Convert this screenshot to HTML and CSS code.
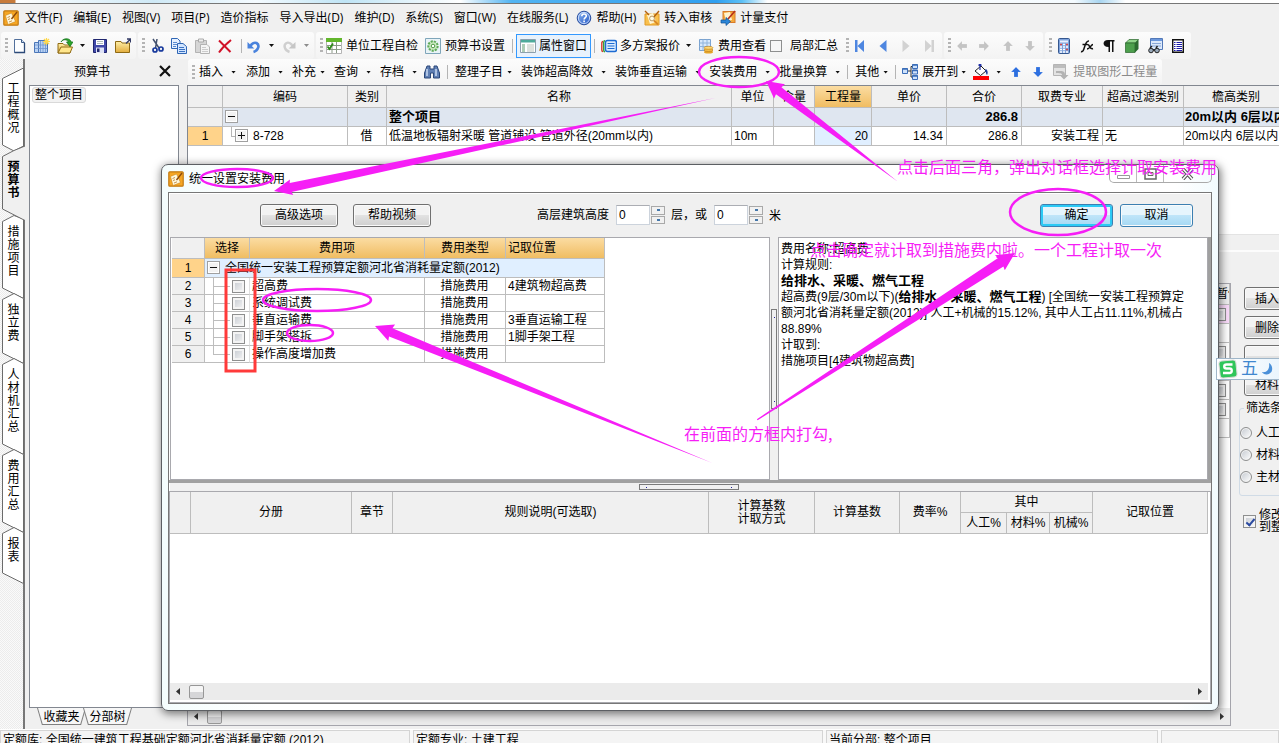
FILE: index.html
```html
<!DOCTYPE html>
<html lang="zh-CN">
<head>
<meta charset="utf-8">
<title>预算书</title>
<link rel="stylesheet" href="styles.css">
</head>
<body>
<svg class="defs" aria-hidden="true">
  <defs>
    <linearGradient id="blue" x1="0" y1="0" x2="1" y2="1"><stop offset="0" stop-color="#8fb8f2"/><stop offset="1" stop-color="#1f55c4"/></linearGradient>
    <linearGradient id="gold" x1="0" y1="0" x2="0" y2="1"><stop offset="0" stop-color="#fff0a8"/><stop offset="1" stop-color="#e2ac3c"/></linearGradient>
    <symbol id="i-app" viewBox="0 0 16 16"><rect x=".8" y=".8" width="14.4" height="14.4" rx="1" fill="#f6a623" stroke="#c27a12" stroke-width="1.2"/><path d="M2.500 5.500 8.500 3l4 8.500L5 14.500z" fill="#fff8dc" stroke="#c27a12" stroke-width=".5"/><path d="M4.500 7.500l2.500-1M5 9.500l2-.7M6 12l3-1.200" stroke="#b5762a" stroke-width=".8"/><path d="M14 2 8.500 9" stroke="#8b4a0c" stroke-width="1.400"/></symbol>
    <symbol id="i-help" viewBox="0 0 16 16"><circle cx="8" cy="8" r="6.800" fill="url(#blue)" stroke="#2a4f9e"/><circle cx="8" cy="8" r="5.600" fill="none" stroke="#dce9ff" stroke-width=".8"/><path d="M5.800 6.200c0-3 4.600-2.900 4.500-.2 0 1.500-2.200 1.600-2.200 3.400M8.100 10.600v1.600" fill="none" stroke="#fff" stroke-width="1.600"/></symbol>
    <symbol id="i-audit" viewBox="0 0 16 16"><path d="M1 4h14v11H1z" fill="#f9c04e" stroke="#e09a24"/><path d="M3 5l6-2 3 9-6 2z" fill="#fff6d6"/><path d="M1 1l4 4M15 1 9 8" stroke="#b3600f" stroke-width="1.400"/><circle cx="8" cy="8.500" r="2.400" fill="#fffbe8" stroke="#a9834a" stroke-width=".8"/><path d="M10 10.500l4 4" stroke="#d98a25" stroke-width="1.800"/></symbol>
    <symbol id="i-pay" viewBox="0 0 16 16"><rect x="3" y="1.500" width="12" height="11" fill="#f5a93a" stroke="#d77a2a"/><path d="M4 3l6-1 2 8-6 1z" fill="#fff3d0"/><path d="M15 1 8 9" stroke="#b5301c" stroke-width="1.600"/><path d="M1 10h5V7.500l4.500 4L6 15.500V13H1z" fill="#2c86d8" stroke="#0d4e93" stroke-width=".7"/></symbol>
    <symbol id="i-new" viewBox="0 0 16 16"><path d="M3.500 1.500h7l3 3v10h-10z" fill="#fdfeff" stroke="#52709c"/><path d="M10.500 1.500v3h3" fill="#cfe0f5" stroke="#3d5b86"/><path d="M13.500 5v9.500h-10" fill="none" stroke="#2c4a78" stroke-width="1.300"/></symbol>
    <symbol id="i-book" viewBox="0 0 16 16"><path d="M.5 4.500h4v10h-4zM4.500 2.500h9v12h-9z" fill="#b9d2f3" stroke="#4b76b8"/><path d="M6.500 3v11M9 3v11M11.500 3v11M1 7h12M1 10.500h12" stroke="#6d94cf" stroke-width=".8"/><path d="M12.500 0v7M9 3.500h7M10 1l5 5M15 1l-5 5" stroke="#ffd84a" stroke-width="1.200"/></symbol>
    <symbol id="i-open" viewBox="0 0 16 16"><path d="M1 15V5.500h5l1.500 1.500H13v8z" fill="url(#gold)" stroke="#8f6a14"/><path d="M1 15l3-6h11.500L13 15z" fill="#ffe68c" stroke="#8f6a14"/><path d="M4 4C6 1 10 1 11.500 4H9.500l3.500 4.500L16 4h-1.700C12.500-.8 6 0 4 4z" fill="#2ba52b" stroke="#12711a" stroke-width=".7"/></symbol>
    <symbol id="i-save" viewBox="0 0 16 16"><path d="M1.500 1.500h13v13h-13z" fill="#4048a8" stroke="#20266e"/><path d="M4 2h8v5H4z" fill="#fff"/><path d="M5 3.500h6M5 5.500h6" stroke="#9aa" stroke-width=".8"/><path d="M4 9.500h8V15H4z" fill="#dfe3f6"/><path d="M5 10.500h2.500V14H5z" fill="#20266e"/></symbol>
    <symbol id="i-folder" viewBox="0 0 16 16"><path d="M.5 3.500H6l1 1.500h7.500v9.500H.5z" fill="url(#gold)" stroke="#8f6a14"/><path d="M11 5.500 15 1.500M12 1h3.500v3.500" fill="none" stroke="#333b66" stroke-width="1.300"/></symbol>
    <symbol id="i-cut" viewBox="0 0 16 16"><path d="M4 1l6 9M8 1 6.500 10" stroke="#44526f" stroke-width="1.500"/><circle cx="6" cy="12" r="2" fill="none" stroke="#16389c" stroke-width="1.700"/><circle cx="12" cy="11" r="2" fill="none" stroke="#16389c" stroke-width="1.700"/></symbol>
    <symbol id="i-copy" viewBox="0 0 16 16"><path d="M.5.5h6l2.500 2.500v7.500H.5z" fill="#e5f0ff" stroke="#2f66b5"/><path d="M2 4.500h4M2 6.500h4M2 8.500h3" stroke="#5b8bd0"/><path d="M6.500 5.500H12l3.500 3v7h-9z" fill="#d2e5ff" stroke="#2f66b5"/><path d="M8 9.500h5M8 11.500h6M8 13.500h6" stroke="#3a72c2"/></symbol>
    <symbol id="i-paste" viewBox="0 0 16 16"><path d="M1.500 2.500h11v12h-11z" fill="#d6d6d6" stroke="#b3b3b3"/><path d="M4.500 1h5v3h-5z" fill="#eee" stroke="#aaa"/><path d="M6.500 6.500H13l2.500 2.500v6.500h-9z" fill="#f5f5f5" stroke="#b3b3b3"/><path d="M8 9.500h4M8 11.500h6M8 13.500h6" stroke="#ccc"/></symbol>
    <symbol id="i-del" viewBox="0 0 16 16"><path d="M2 2.500 13.500 14M14 2C9 6 5 10 2 14.500" fill="none" stroke="#d11228" stroke-width="2"/></symbol>
    <symbol id="i-undo" viewBox="0 0 16 16"><path d="M7.500 14c5-1.500 6.500-7 3-9C8 4 5.500 6 4.500 8" fill="none" stroke="#4a83dd" stroke-width="2.600"/><path d="M1.500 4v6.500h6.800z" fill="#4a83dd"/></symbol>
    <symbol id="i-redo" viewBox="0 0 16 16"><path d="M8.500 14c-5-1.500-6.500-7-3-9C8 4 10.500 6 11.500 8" fill="none" stroke="#cfcfcf" stroke-width="2.400"/><path d="M14.500 4v6.500H7.700z" fill="#c6c6c6"/></symbol>
    <symbol id="i-check" viewBox="0 0 16 16"><path d="M.5.5h15v15H.5z" fill="#fff" stroke="#b5b5b5"/><path d="M0 0h16v4H0z" fill="#62b62c"/><path d="M1 7.500h14M1 11.500h14M6 4v11M10.500 4v11" stroke="#8a9a86"/><path d="M1.500 8.500l2 2.500L7 5.500" fill="none" stroke="#2e8b18" stroke-width="1.800"/></symbol>
    <symbol id="i-gear" viewBox="0 0 16 16"><path d="M.5.5h15v15H.5z" fill="#e9f3f7" stroke="#7fa6ba"/><circle cx="8" cy="8" r="4.700" fill="#cdeac2" stroke="#5faa58" stroke-width="2" stroke-dasharray="2.200 1"/><circle cx="8" cy="8" r="1.800" fill="#fff" stroke="#4d9a44"/></symbol>
    <symbol id="i-prop" viewBox="0 0 16 16"><path d="M.5 1.500h15v13H.5z" fill="#fff" stroke="#8ca0ad"/><path d="M1 2h14v2.500H1z" fill="#4eab9b"/><path d="M2 7h3M2 9h3M2 11h3M2 13h3" stroke="#5b9c6e"/><path d="M7 7h7M7 9h7M7 11h7M7 13h7" stroke="#b9c4bb"/></symbol>
    <symbol id="i-multi" viewBox="0 0 16 16"><path d="M2 3.500Q.8 3.500.8 5v7q0 1.500 1.200 1.500" fill="none" stroke="#d23b2c" stroke-width="1.400"/><path d="M4 2.800q-1.300 0-1.300 1.500v8q0 1.500 1.300 1.500" fill="none" stroke="#37a137" stroke-width="1.400"/><rect x="4.500" y="2.500" width="11" height="11" rx="2" fill="#dcecff" stroke="#1d6bd2" stroke-width="1.500"/><path d="M6.500 5.500h7M6.500 8h7M6.500 10.500h7" stroke="#1d6bd2" stroke-width="1.200"/></symbol>
    <symbol id="i-fee" viewBox="0 0 16 16"><path d="M1.500 1.500h11v11h-11z" fill="#d7e8fb" stroke="#7aa2cf"/><path d="M1.500 5h11M1.500 8.500h11M5 1.500v11M9 1.500v11" stroke="#8fb3da"/><ellipse cx="10.500" cy="14" rx="4.500" ry="1.500" fill="#e5a427"/><ellipse cx="10.500" cy="12" rx="4.500" ry="1.500" fill="#f5c04a" stroke="#b9781a" stroke-width=".6"/><ellipse cx="10.500" cy="9.800" rx="4.500" ry="1.500" fill="#ffd971" stroke="#b9781a" stroke-width=".6"/></symbol>
    <symbol id="i-first" viewBox="0 0 16 16"><path d="M3 2h2.500v12H3zM12 2v12L5.500 8z" fill="#4e86e0"/></symbol>
    <symbol id="i-prev" viewBox="0 0 16 16"><path d="M11.500 2v12L4.500 8z" fill="#4e86e0"/></symbol>
    <symbol id="i-next" viewBox="0 0 16 16"><path d="M4.500 2v12l7-6z" fill="#d2d2d2"/></symbol>
    <symbol id="i-last" viewBox="0 0 16 16"><path d="M4 2v12l6.500-6zM10.500 2H13v12h-2.500z" fill="#d2d2d2"/></symbol>
    <symbol id="i-arrow" viewBox="0 0 16 16"><path d="M8 3l5 5h-3v5H6V8H3z" fill="currentColor" stroke="#fff" stroke-opacity=".3" stroke-width=".6"/></symbol>
    <symbol id="i-calc" viewBox="0 0 16 16"><rect x="2.500" y=".5" width="11" height="15" rx="1" fill="#7fa3dc" stroke="#35578f"/><path d="M4 2.500h8v2H4z" fill="#e8f0ff"/><path d="M4 6.500h2M7 6.500h2M10 6.500h2M4 9h2M7 9h2M10 9h2M4 11.500h2M7 11.500h2M4 14h2M7 14h2M10 14h2" stroke="#fff" stroke-width="1.500"/><path d="M4 6.500h2M10 6.500h2M10 11.500h2" stroke="#d94848" stroke-width="1.500"/></symbol>
    <symbol id="i-fx" viewBox="0 0 16 16"><path d="M2 13.500c4 1.500 3-11 8-10.500M3.500 6.500h5M8.500 7c2-1.500 2 5 5.500 3.500M14 6.500c-2 0-3 4.500-6 4.500" fill="none" stroke="#111" stroke-width="1.500"/></symbol>
    <symbol id="i-para" viewBox="0 0 16 16"><path d="M7 2h6.500v1.500h-1V14h-1.500V3.500H9V14H7.500V9C1 9 1 2 7 2z" fill="#111"/></symbol>
    <symbol id="i-cube" viewBox="0 0 16 16"><path d="M1.500 5 5 1.500h9.500L11 5z" fill="#8fd48a" stroke="#27632a" stroke-width=".7"/><path d="M1.500 5H11v9.500H1.500z" fill="#4c9f4c" stroke="#27632a" stroke-width=".7"/><path d="M11 5l3.500-3.500V11L11 14.500z" fill="#2a6b2f"/></symbol>
    <symbol id="i-find" viewBox="0 0 16 16"><path d="M3.500.5h12v11h-12z" fill="#dce9fb" stroke="#5379b8"/><path d="M4 1h11v2H4z" fill="#6b97dc"/><path d="M5 5.500h9M5 8h9" stroke="#8aa9d8"/><circle cx="4" cy="12.500" r="2.300" fill="#9ab" stroke="#222"/><circle cx="10" cy="12.500" r="2.300" fill="#9ab" stroke="#222"/><path d="M3 10l2-2M9 10l1.500-2M6 12h2" stroke="#222" stroke-width="1.400"/></symbol>
    <symbol id="i-list" viewBox="0 0 16 16"><path d="M2.700 1.700h10.600v12.600H2.700z" fill="#fff" stroke="#111" stroke-width="1.400"/><path d="M4 4.500h1.500M6.500 4.500H12M4 6.500h1.500M6.500 6.500H12M4 8.500h1.500M6.500 8.500H12M4 10.500h1.500M6.500 10.500H12M4 12.500h1.500M6.500 12.500H12" stroke="#1919a8"/></symbol>
    <symbol id="i-binoc" viewBox="0 0 16 16"><path d="M3 2h3v3h4V2h3l2.500 7v5H9.500V9h-3v5H.5V9z" fill="#5f7fb4" stroke="#2b4779"/><path d="M3 5v7M12 5v7" stroke="#c9daf2" stroke-width="1.500"/></symbol>
    <symbol id="i-tree" viewBox="0 0 16 16"><path d="M5 7h4M9 2.500V13M9 2.500h2M9 13h2" stroke="#333" fill="none"/><path d="M.5 4.500h5v5h-5zM10.500.5h5v4h-5zM10.500 6h5v4h-5zM10.500 11.500h5v4h-5z" fill="#cfe2fb" stroke="#3a6db8"/><path d="M.5 5h5M10.500 1h5M10.500 6.500h5M10.500 12h5" stroke="#3a6db8" stroke-width="1.400"/></symbol>
    <symbol id="i-fill" viewBox="0 0 16 16"><path d="M2 7l6-5 5 5-5.500 4.500z" fill="#fff" stroke="#222"/><path d="M7 0v6M5.500 1.500 7 0l1.500 1.500" stroke="#1f2fa5" fill="none" stroke-width="1.200"/><path d="M12.500 5c2 .5 3 4 1.500 6-1.500-1-.5-3-2-4z" fill="#1f3f9c"/><path d="M0 12h16v4H0z" fill="#f00"/></symbol>
    <symbol id="i-extract" viewBox="0 0 16 16"><path d="M.5.5h12v11H.5z" fill="#e3e3e3" stroke="#b5b5b5"/><path d="M1 1h11v3H1z" fill="#bdbdbd"/><path d="M3 7h4c4 0 5 1 5 4h3.500L11 15.500 6.500 11H9c0-2-2-1.500-6-2z" fill="#b3b3b3"/></symbol>
  </defs>
</svg>

<div class="app">
  <div class="glass"></div>
  <nav class="menubar">
    <svg class="ic"><use href="#i-app"/></svg>
    <button>文件(F)</button><button>编辑(E)</button><button>视图(V)</button><button>项目(P)</button><button>造价指标</button><button>导入导出(D)</button><button>维护(D)</button><button>系统(S)</button><button>窗口(W)</button><button>在线服务(L)</button>
    <button><svg class="ic"><use href="#i-help"/></svg>帮助(H)</button>
    <button><svg class="ic"><use href="#i-audit"/></svg>转入审核</button>
    <button><svg class="ic"><use href="#i-pay"/></svg>计量支付</button>
  </nav>

  <div class="toolbar">
    <div class="group">
      <i class="grip"></i>
      <button class="x3" aria-label="新建"><svg class="ic"><use href="#i-new"/></svg></button>
      <button class="x7" aria-label="新建单位工程"><svg class="ic"><use href="#i-book"/></svg></button>
      <button class="x7" aria-label="打开"><svg class="ic"><use href="#i-open"/></svg><i class="dd x7"></i></button>
      <button class="x7" aria-label="保存"><svg class="ic"><use href="#i-save"/></svg></button>
      <button class="x7" aria-label="文件夹"><svg class="ic"><use href="#i-folder"/></svg></button>
    </div>
    <div class="group">
      <i class="grip"></i>
      <button class="x4" aria-label="剪切"><svg class="ic"><use href="#i-cut"/></svg></button>
      <button class="x6" aria-label="复制"><svg class="ic"><use href="#i-copy"/></svg></button>
      <button class="x7" aria-label="粘贴"><svg class="ic"><use href="#i-paste"/></svg></button>
      <button class="x7" aria-label="删除"><svg class="ic"><use href="#i-del"/></svg></button>
      <i class="sep x8"></i>
      <button class="x4" aria-label="撤销"><svg class="ic"><use href="#i-undo"/></svg><i class="dd x7"></i></button>
      <button class="x7 off" aria-label="恢复"><svg class="ic"><use href="#i-redo"/></svg><i class="dd x7"></i></button>
    </div>
    <div class="group">
      <i class="grip"></i>
      <button class="x3"><svg class="ic"><use href="#i-check"/></svg><span class="x4">单位工程自检</span></button>
      <button class="x7"><svg class="ic"><use href="#i-gear"/></svg><span class="x4">预算书设置</span></button>
      <i class="sep x7"></i>
      <button class="boxed x3"><svg class="ic"><use href="#i-prop"/></svg><span class="x3">属性窗口</span></button>
      <i class="sep x3"></i>
      <button class="x6"><svg class="ic"><use href="#i-multi"/></svg><span class="x3">多方案报价</span><i class="dd x6"></i></button>
      <button class="x7"><svg class="ic"><use href="#i-fee"/></svg><span class="x4">费用查看</span></button>
      <label class="tick x4"><input type="checkbox"><span class="x8">局部汇总</span></label>
      <i class="grip x8"></i>
      <button class="x3" aria-label="首条"><svg class="ic"><use href="#i-first"/></svg></button>
      <button class="x7" aria-label="上一条"><svg class="ic"><use href="#i-prev"/></svg></button>
      <button class="x7" aria-label="下一条"><svg class="ic"><use href="#i-next"/></svg></button>
      <button class="x7" aria-label="末条"><svg class="ic"><use href="#i-last"/></svg></button>
    </div>
    <div class="group off">
      <i class="grip"></i>
      <button class="x3" aria-label="左移"><svg class="ic left"><use href="#i-arrow"/></svg></button>
      <button class="x6" aria-label="右移"><svg class="ic right"><use href="#i-arrow"/></svg></button>
      <button class="x8" aria-label="上移"><svg class="ic"><use href="#i-arrow"/></svg></button>
      <button class="x6" aria-label="下移"><svg class="ic down"><use href="#i-arrow"/></svg></button>
    </div>
    <div class="group">
      <i class="grip"></i>
      <button class="x4" aria-label="计算器"><svg class="ic"><use href="#i-calc"/></svg></button>
      <button class="x7" aria-label="函数"><svg class="ic"><use href="#i-fx"/></svg></button>
      <button class="x6" aria-label="段落"><svg class="ic"><use href="#i-para"/></svg></button>
      <button class="x7" aria-label="图形"><svg class="ic"><use href="#i-cube"/></svg></button>
      <button class="x7" aria-label="查找"><svg class="ic"><use href="#i-find"/></svg></button>
      <button class="x7" aria-label="列表"><svg class="ic"><use href="#i-list"/></svg></button>
    </div>
  </div>

  <div class="main">
    <div class="rail">
      <svg class="rail-art" width="25" height="530" viewBox="0 0 25 530" aria-hidden="true">
        <g fill="#fff" stroke="#6b6b6b">
          <path d="M23.500 9 2.500 19.500V86L14 92l9.500-5z"/>
          <path d="M23.500 160 14 156.500 2.500 162.500V229l21 10.500z"/>
          <path d="M23.500 239.500 14 234.500 2.500 240.500V294l21 10.500z"/>
          <path d="M23.500 304.500 14 299.500 2.500 305.500V385l21 10.500z"/>
          <path d="M23.500 395.500 14 390.500 2.500 396.500V463l21 10.500z"/>
          <path d="M23.500 473.500 14 468.500 2.500 474.500V514l21 10.500z"/>
        </g>
        <path d="M25 87 14 91.500 2.500 97.500V150l22.500 11.500z" fill="#f0f0f0"/>
        <path d="M25 87 14 91.500 2.500 97.500V150l22.500 11.500" fill="none" stroke="#6b6b6b"/>
      </svg>
      <div class="rail-tabs">
        <button>工程概况</button><button class="on">预算书</button><button>措施项目</button><button>独立费</button><button>人材机汇总</button><button>费用汇总</button><button>报表</button>
      </div>
    </div>

    <aside class="side">
      <header><span>预算书</span><button aria-label="关闭"><svg width="12" height="12" viewBox="0 0 12 12"><path d="M1 1l10 10M11 1 1 11" stroke="#111" stroke-width="2.200"/></svg></button></header>
      <div class="tree"><button>整个项目</button></div>
      <div class="side-tabs"><button>收藏夹</button><button>分部树</button></div>
    </aside>

    <section class="work">
      <div class="toolbar second">
        <div class="group">
          <i class="grip"></i>
          <button class="x4">插入<i class="dd x8"></i></button>
          <button class="x10">添加<i class="dd x8"></i></button>
          <button class="x9">补充<i class="dd x4"></i></button>
          <button class="x9">查询<i class="dd x8"></i></button>
          <button class="x9">存档<i class="dd x8"></i></button>
          <button class="x7" aria-label="查找"><svg class="ic"><use href="#i-binoc"/></svg></button>
          <i class="sep x7"></i>
          <button class="x7">整理子目<i class="dd x4"></i></button>
          <button class="x9">装饰超高降效<i class="dd x8"></i></button>
          <button class="x9">装饰垂直运输<i class="dd x8"></i></button>
          <button class="x9">安装费用<i class="dd x8"></i></button>
          <button class="x9">批量换算<i class="dd x8"></i></button>
          <i class="sep x7"></i>
          <button class="x7">其他<i class="dd x4"></i></button>
          <i class="sep x7"></i>
          <button class="x6"><svg class="ic"><use href="#i-tree"/></svg><span class="x4">展开到</span><i class="dd x3"></i></button>
          <button class="x7" aria-label="填充颜色"><svg class="ic"><use href="#i-fill"/></svg><i class="dd x7"></i></button>
          <button class="x7 move" aria-label="上移"><svg class="ic"><use href="#i-arrow"/></svg></button>
          <button class="x6 move" aria-label="下移"><svg class="ic down"><use href="#i-arrow"/></svg></button>
          <button class="x7 dim"><svg class="ic"><use href="#i-extract"/></svg><span class="x4">提取图形工程量</span></button>
        </div>
      </div>

      <div class="sheet">
        <table class="grid items">
          <colgroup><col class="c35"><col class="c125"><col class="c39"><col class="c345"><col class="c42"><col class="c41"><col class="c57"><col class="c75"><col class="c75"><col class="c81"><col class="c81"><col class="c105"></colgroup>
          <thead><tr><th></th><th>编码</th><th>类别</th><th>名称</th><th>单位</th><th>含量</th><th class="gold">工程量</th><th>单价</th><th>合价</th><th>取费专业</th><th>超高过滤类别</th><th>檐高类别</th></tr></thead>
          <tbody>
            <tr class="total"><th></th><td class="code"><i class="node minus"></i></td><td></td><td>整个项目</td><td></td><td></td><td></td><td></td><td class="r">286.8</td><td></td><td></td><td>20m以内 6层以内</td></tr>
            <tr><th class="cur">1</th><td class="code child"><i class="node plus"></i>8-728</td><td class="c">借</td><td>低温地板辐射采暖 管道铺设 管道外径(20mm以内)</td><td>10m</td><td></td><td class="r pale">20</td><td class="r">14.34</td><td class="r">286.8</td><td class="r">安装工程</td><td>无</td><td>20m以内 6层以内</td></tr>
          </tbody>
        </table>
      </div>

      <div class="lower">
        <div class="lower-bar"></div>
        <div class="lower-body">
          <div class="materials">
            <table class="grid est">
              <thead><tr><th>暂估</th></tr></thead>
              <tbody><tr class="pink"><td><input type="checkbox" aria-label="暂估"></td></tr><tr><td></td></tr><tr><td><input type="checkbox" aria-label="暂估"></td></tr><tr><td></td></tr><tr><td><input type="checkbox" aria-label="暂估"></td></tr><tr><td><input type="checkbox" aria-label="暂估"></td></tr><tr><td></td></tr></tbody>
            </table>
            <div class="hscroll"><i class="tri l"></i><i class="thumb"></i><i class="tri r"></i></div>
          </div>
          <div class="actions">
            <button class="btn">插入</button><button class="btn">删除</button><button class="btn">&nbsp;</button><button class="btn late">材料</button>
            <fieldset><legend>筛选条件</legend>
              <label><input type="radio" name="f">人工</label><label><input type="radio" name="f">材料</label><label><input type="radio" name="f">主材</label>
            </fieldset>
            <label class="apply"><input type="checkbox" checked><span>修改<br>到整</span></label>
          </div>
        </div>
      </div>
    </section>
  </div>

  <footer class="status"><span>定额库: 全国统一建筑工程基础定额河北省消耗量定额 (2012)</span><span>定额专业: 土建工程</span><span>当前分部: 整个项目</span><span></span></footer>
</div>

<div class="ime"><svg width="20" height="20" viewBox="0 0 20 20"><rect x="1.500" y="1.500" width="17" height="17" rx="3" fill="#2fc65b" stroke="#d9d9d9" transform="rotate(-6 10 10)"/><path d="M14.500 5.500H8.500c-3 0-3 4 0 4h3c3 0 3 4.500 0 4.500H5" fill="none" stroke="#fff" stroke-width="2.400"/></svg><span>五</span><svg width="14" height="14" viewBox="0 0 14 14"><path d="M8 1c5 3 4 11-2 11.500-2.500.2-4-1-5-2.500 5 1 8-3 7-9z" fill="#4a90d9"/></svg></div>

<div class="dialog" role="dialog" aria-label="统一设置安装费用">
  <header class="title"><svg class="ic"><use href="#i-app"/></svg><span>统一设置安装费用</span>
    <div class="winctl"><button aria-label="最小化"><svg width="13" height="12" viewBox="0 0 13 12"><path d="M.5 7.500h12v3H.5z" fill="#fff" stroke="#999"/></svg></button><button aria-label="最大化"><svg width="13" height="12" viewBox="0 0 13 12"><path d="M1 1h11v10H1z" fill="#fff" stroke="#666" stroke-width="1.500"/><path d="M4 4.500h5v3H4z" fill="none" stroke="#666"/></svg></button><button aria-label="关闭"><svg width="13" height="12" viewBox="0 0 13 12"><path d="M2 1l9 10M11 1 2 11" stroke="#555" stroke-width="3.600"/><path d="M2 1l9 10M11 1 2 11" stroke="#fff" stroke-width="1.500"/></svg></button></div>
  </header>
  <div class="client">
    <div class="opts">
      <button class="btn">高级选项</button><button class="btn">帮助视频</button>
      <div class="height"><label for="fl">高层建筑高度</label><input id="fl" value="0"><span class="spin"><button aria-label="增加层"></button><button aria-label="减少层"></button></span><label for="mt">层，或</label><input id="mt" value="0"><span class="spin"><button aria-label="增加米"></button><button aria-label="减少米"></button></span><span class="unit">米</span></div>
      <div class="ok"><button class="btn blue focus">确定</button><button class="btn blue">取消</button></div>
    </div>
    <div class="split">
      <div class="pane fees">
        <table class="grid">
          <colgroup><col class="c33"><col class="c45"><col class="c175"><col class="c81"><col class="c99"></colgroup>
          <thead><tr><th></th><th class="gold">选择</th><th class="gold">费用项</th><th class="gold">费用类型</th><th class="gold l">记取位置</th></tr></thead>
          <tbody>
            <tr class="root"><th class="cur">1</th><td colspan="4"><i class="node minus"></i>全国统一安装工程预算定额河北省消耗量定额(2012)</td></tr>
            <tr><th>2</th><td class="pick"><input type="checkbox" aria-label="超高费"></td><td>超高费</td><td class="c">措施费用</td><td>4建筑物超高费</td></tr>
            <tr><th>3</th><td class="pick"><input type="checkbox" aria-label="系统调试费"></td><td>系统调试费</td><td class="c">措施费用</td><td></td></tr>
            <tr><th>4</th><td class="pick"><input type="checkbox" aria-label="垂直运输费"></td><td>垂直运输费</td><td class="c">措施费用</td><td>3垂直运输工程</td></tr>
            <tr><th>5</th><td class="pick"><input type="checkbox" aria-label="脚手架搭拆"></td><td>脚手架搭拆</td><td class="c">措施费用</td><td>1脚手架工程</td></tr>
            <tr><th>6</th><td class="pick end"><input type="checkbox" aria-label="操作高度增加费"></td><td>操作高度增加费</td><td class="c">措施费用</td><td></td></tr>
          </tbody>
        </table>
      </div>
      <div class="vbar"><i></i></div>
      <div class="pane rule">
        <p>费用名称:超高费<br>计算规则:<br><b>给排水、采暖、燃气工程</b><br>超高费(9层/30m以下)(<b>给排水、采暖、燃气工程</b>) [全国统一安装工程预算定<br>额河北省消耗量定额(2012)] 人工+机械的15.12%, 其中人工占11.11%,机械占<br>88.89%<br>计取到:<br>措施项目[4建筑物超高费]</p>
      </div>
    </div>
    <div class="hbar"><i></i></div>
    <div class="detail">
      <table class="grid rules">
        <colgroup><col class="c21"><col class="c161"><col class="c41"><col class="c316"><col class="c106"><col class="c85"><col class="c61"><col class="c46"><col class="c43"><col class="c43"><col></colgroup>
        <thead>
          <tr><th rowspan="2"></th><th rowspan="2">分册</th><th rowspan="2">章节</th><th rowspan="2">规则说明(可选取)</th><th rowspan="2">计算基数<br>计取方式</th><th rowspan="2">计算基数</th><th rowspan="2">费率%</th><th colspan="3">其中</th><th rowspan="2">记取位置</th></tr>
          <tr><th>人工%</th><th>材料%</th><th>机械%</th></tr>
        </thead>
      </table>
      <div class="hscroll"><i class="tri l"></i><i class="thumb"></i><i class="tri r"></i></div>
    </div>
  </div>
</div>

<svg class="marks" width="1279" height="743" viewBox="0 0 1279 743">
  <g fill="none" stroke="#f61ef6" stroke-width="2.500">
    <ellipse cx="739" cy="72" rx="40" ry="15"/>
    <ellipse cx="237" cy="178" rx="36" ry="9"/>
    <ellipse cx="317" cy="300" rx="54" ry="11"/>
    <ellipse cx="310" cy="333" rx="23" ry="8"/>
    <ellipse cx="1058" cy="212" rx="48" ry="23"/>
  </g>
  <rect x="226" y="270" width="29" height="101" fill="none" stroke="#ff3a3a" stroke-width="3"/>
  <g fill="#f61ef6">
    <path transform="translate(274 191) rotate(-11.900)" d="M0 0 18-8 17-4.500 451 0 17 4.500 18 8z"/>
    <path transform="translate(766 81) rotate(37.400)" d="M0 0 17-9 16-4.500 166 0 16 4.500 17 9z"/>
    <path transform="translate(375 326) rotate(22.100)" d="M0 0 18-9 17-4.500 364 0 17 4.500 18 9z"/>
    <path transform="translate(1015 253) rotate(147.100)" d="M0 0 18-9 17-5 307-.7V.7L17 5l1 4z"/>
    <g class="note">
      <text x="897" y="173">点击后面三角，弹出对话框选择计取安装费用</text>
      <text x="810" y="256">点击确定就计取到措施费内啦。一个工程计取一次</text>
      <text x="684" y="440">在前面的方框内打勾,</text>
    </g>
  </g>
</svg>
</body>
</html>
```

FILE: styles.css
```css
* { box-sizing: border-box; }
html, body { height: 100%; margin: 0; overflow: hidden; }
body { position: relative; background: #f0f0f0; color: #000; font: 12px/16px "Liberation Sans", "Noto Sans CJK SC", sans-serif; }
button, input { font: inherit; color: inherit; margin: 0; padding: 0; }
button { border: 0; background: none; white-space: nowrap; }
i { font-style: normal; flex: none; }
svg { display: block; flex: none; }
.defs { position: absolute; width: 0; height: 0; }
.ic { width: 16px; height: 16px; }
.left { transform: rotate(-90deg); }
.right { transform: rotate(90deg); }
.down { transform: rotate(180deg); }

.x3 { margin-left: 3px; }
.x4 { margin-left: 4px; }
.x6 { margin-left: 6px; }
.x7 { margin-left: 7px; }
.x8 { margin-left: 8px; }
.x9 { margin-left: 9px; }
.x10 { margin-left: 10px; }

.app { height: 100%; display: flex; flex-direction: column; }
.glass { height: 4px; flex: none; border-bottom: 1px solid #777; background: linear-gradient(90deg, #c77b3c 0 15px, #fff 16px, #cfe9f6 12%, #f5fbff 20%, #bfe4f5 27%, #fff 36%, #52b4f2 40%, #2f9ff0 56%, #5cc0f5 58%, #fff 60%, #f5fbff 84%, #a8d5f0 86%, #fff 88%); }
.menubar { flex: none; height: 28px; display: flex; align-items: center; gap: 11px; padding-left: 3px; font-family: "Open Sans", "Noto Sans CJK SC", sans-serif; }
.menubar > .ic { margin-right: -5px; }
.menubar button { display: flex; align-items: center; gap: 4px; }
.menubar button .ic { margin-left: -3px; }

.toolbar { flex: none; height: 27px; display: flex; gap: 2px; padding-left: 1px; }
.toolbar .group { display: flex; align-items: center; padding: 0 5px 0 4px; border-radius: 3px; background: linear-gradient(#fcfcfc, #f3f3f3); }
.toolbar button, .tick { display: flex; align-items: center; height: 24px; white-space: nowrap; }
.toolbar .boxed { border: 1px solid #3399ff; background: #e8f2fc; padding: 0 3px; }
.tick input { appearance: none; width: 12px; height: 12px; border: 1px solid #8e8f8f; background: #f6f6f6; }
.grip { width: 3px; height: 15px; background: repeating-linear-gradient(#b4b4b4 0 2px, transparent 2px 4px); }
.sep { width: 1px; height: 14px; background: #b4b4b4; }
.dd { width: 5px; height: 3px; background: #111; clip-path: polygon(0 0, 100% 0, 50% 100%); }
.off { color: #c4c4c4; }
.off .dd { background: #8c8c8c; }
.dim { color: #8a8a8a; }
.move { color: #2d6fe0; }

.main { flex: 1; min-height: 0; display: flex; }
.rail { position: relative; flex: none; width: 25px; border-right: 2px solid #777; background: repeating-conic-gradient(#ececec 0 25%, #fafafa 0 50%) 0 0 / 2px 2px; }
.rail-art { position: absolute; left: 0; top: 0; }
.rail-tabs { position: relative; display: flex; flex-direction: column; padding-top: 13px; }
.rail-tabs button { white-space: normal; word-break: break-all; width: 26px; padding: 11px 6px 15px 7px; line-height: 13px; text-align: center; }
.rail-tabs .on { font-weight: bold; }

.side { flex: none; width: 162px; padding: 0 8px 0 4px; display: flex; flex-direction: column; }
.side header { height: 26px; display: flex; align-items: center; justify-content: center; position: relative; padding-right: 24px; }
.side header button { position: absolute; right: 8px; top: 6px; }
.tree { flex: 1; background: #fff; border: 1px solid #828790; padding: 1px 2px; }
.tree button { border: 1px solid #d9d9d9; border-radius: 3px; background: #f2f2f2; padding: 0 2px; line-height: 14px; }
.side-tabs { height: 21px; display: flex; padding-left: 8px; }
.side-tabs button { height: 17px; width: 49px; margin-right: -3px; background: #808080; position: relative; z-index: 0; clip-path: polygon(0 0, 100% 0, 90% 100%, 10% 100%); line-height: 16px; }
.side-tabs button::before { content: ""; position: absolute; z-index: -1; inset: 0 1px 1px; background: #f7f7f7; clip-path: polygon(0 0, 100% 0, 90% 100%, 10% 100%); }

.work { flex: 1; min-width: 0; display: flex; flex-direction: column; }
.second { height: 26px; }
.sheet { flex: none; height: 149px; background: #fff; border: 1px solid #828790; border-right: 0; border-bottom: 0; overflow: hidden; }

.grid { table-layout: fixed; border-collapse: separate; border-spacing: 0; line-height: 16px; }
.grid th, .grid td { height: 19px; padding: 0 3px 0 2px; border-right: 1px solid #bdbdbd; border-bottom: 1px solid #bdbdbd; text-align: left; white-space: nowrap; overflow: hidden; background: #fff; }
.grid th { background: #f0f0f0; font-weight: normal; text-align: center; padding: 0; }
.items { width: 1101px; }
.items thead th { height: 22px; }
.items .total td { background: #dfe6f0; font-weight: bold; font-size: 13px; }
.items td:last-child { padding-left: 1px; }
.grid .gold { background: linear-gradient(#fbdca2, #f0bd62); }
.grid th.cur { background: #ffd38a; }
.grid th.l { text-align: left; padding-left: 2px; }
.grid td.pale { background: #e0efff; }
.grid td.r { text-align: right; }
.grid td.c { text-align: center; }
.node { display: inline-block; vertical-align: -2px; width: 13px; height: 13px; border: 1px solid #a0a0a0; background: linear-gradient(#111, #111) center / 7px 1px no-repeat, #f2f2f2; box-shadow: inset 0 0 0 1px #fff; }
.node.plus { background: linear-gradient(#111, #111) center / 7px 1px no-repeat, linear-gradient(#111, #111) center / 1px 7px no-repeat, #f2f2f2; margin-right: 5px; }
.grid td.child { padding-left: 12px; background: linear-gradient(#b5b5b5, #b5b5b5) 8px 0 / 1px 10px no-repeat, linear-gradient(#b5b5b5, #b5b5b5) 8px 9px / 4px 1px no-repeat, #fff; }
.c21 { width: 21px; } .c33 { width: 33px; } .c35 { width: 35px; } .c39 { width: 39px; } .c41 { width: 41px; } .c42 { width: 42px; } .c43 { width: 43px; } .c45 { width: 45px; } .c46 { width: 46px; } .c57 { width: 57px; } .c61 { width: 61px; } .c75 { width: 75px; } .c81 { width: 81px; } .c85 { width: 85px; } .c99 { width: 99px; } .c105 { width: 105px; } .c106 { width: 106px; } .c125 { width: 125px; } .c161 { width: 161px; } .c175 { width: 175px; } .c316 { width: 316px; } .c345 { width: 345px; }

.lower { flex: 1; min-height: 0; display: flex; flex-direction: column; }
.lower-bar { height: 18px; background: #f0f0f0; border-top: 1px solid #e3e3e3; border-bottom: 2px solid #fcfcfc; }
.lower-body { flex: 1; min-height: 0; display: flex; padding-top: 31px; }
.materials { flex: 1; display: flex; flex-direction: column; justify-content: space-between; background: #fff; border: 1px solid #a5a5ac; margin-bottom: 3px; }
.est { width: 24px; align-self: flex-end; }
.grid.est thead th { height: 21px; text-align: left; padding-left: 10px; }
.est .pink td { background: #fbdcfb; }
.est td { text-align: right; }
.est input, .pick input, .apply input { appearance: none; display: inline-block; vertical-align: -3px; width: 13px; height: 13px; border: 1px solid #8e8f8f; background: linear-gradient(135deg, #c4c9d0, #f6f6f6); box-shadow: inset 0 0 0 2px #f4f4f4; }
.actions { flex: none; width: 48px; padding: 4px 0 0 8px; overflow: hidden; }
.actions > .btn { display: block; width: 75px; margin: 0 0 6px 5px; text-align: left; padding-left: 10px; }
.actions .late { margin-top: -1px; }
.actions fieldset { width: 90px; height: 96px; margin: -2px 0 0; padding: 0; border: 1px solid #d0dbe6; border-radius: 3px; }
.actions legend { padding: 0 2px; margin-left: 4px; }
.actions fieldset label { display: flex; align-items: center; gap: 4px; height: 22px; }
.actions fieldset label:first-of-type { margin-top: 6px; }
.actions input[type=radio] { appearance: none; width: 12px; height: 12px; border: 1px solid #8e8f8f; border-radius: 50%; background: linear-gradient(135deg, #c4c9d0, #fff); box-shadow: inset 0 0 0 1px #f4f4f4; }
.apply { display: flex; align-items: center; gap: 3px; line-height: 12px; margin: 13px 0 0 4px; white-space: nowrap; }
.apply input { flex: none; position: relative; }
.apply input::after { content: ""; position: absolute; left: 4px; top: 1px; width: 3px; height: 7px; border: solid #2b4aa0; border-width: 0 2px 2px 0; transform: rotate(40deg); }

.hscroll { height: 17px; display: flex; align-items: center; background: #ebebeb; padding: 0 6px; }
.tri { width: 4px; height: 7px; background: #333; clip-path: polygon(100% 0, 100% 100%, 0 50%); }
.tri.r { margin-left: auto; clip-path: polygon(0 0, 100% 50%, 0 100%); }
.thumb { width: 15px; height: 14px; margin-left: 9px; border: 1px solid #979797; border-radius: 2px; background: linear-gradient(#f6f6f6 50%, #d6d6d8 50%); }

.status { flex: none; height: 14px; display: grid; grid-template-columns: 410fr 410fr 332fr 118fr; gap: 3px; border-top: 1px solid #fff; background: #f8f8f8; overflow: hidden; }
.status span { border: 1px solid #d4d4d4; border-bottom: 0; padding: 1px 0 0 2px; white-space: nowrap; background: #f4f4f4; height: 20px; }

.ime { position: absolute; right: 0; top: 358px; width: 63px; height: 22px; display: flex; align-items: center; gap: 3px; padding-left: 1px; border: 1px solid #9fb6c9; border-right: 0; background: linear-gradient(90deg, #fff, #eaf5fd); z-index: 3; }
.ime span { font-size: 17px; line-height: 20px; color: #3f87cf; }

.dialog { position: absolute; z-index: 2; left: 161px; right: 60px; top: 164px; bottom: 32px; display: flex; flex-direction: column; padding: 0 6px 6px; border: 1px solid #5c5f63; border-radius: 7px; background: linear-gradient(90deg, #f4fdfd, #fff 10% 96%, #f2fbfe); box-shadow: 1px 2px 8px 1px rgba(0, 0, 0, .5); }
.title { flex: none; height: 27px; display: flex; align-items: center; gap: 5px; }
.winctl { margin: 0 0 auto auto; height: 18px; display: flex; border: 1px solid #aaa; border-top: 0; border-radius: 0 0 5px 5px; }
.winctl button { width: 27px; display: flex; align-items: center; justify-content: center; border-right: 1px solid #bbb; }
.winctl button:last-child { width: 47px; border: 0; }
.client { flex: 1; min-height: 0; display: flex; flex-direction: column; background: #f0f0f0; border: 1px solid #777; box-shadow: inset 1px 1px #fff; }
.opts { flex: none; height: 44px; display: flex; align-items: center; padding: 0 18px 0 91px; gap: 15px; }
.btn { height: 23px; border: 1px solid #707070; border-radius: 3px; background: linear-gradient(#f3f3f3 50%, #e2e2e2 50%, #cfcfcf); box-shadow: inset 0 0 0 1px #fafafa; text-align: center; }
.opts .btn { width: 78px; }
.height { display: flex; align-items: center; margin-left: 91px; }
.height input { width: 34px; height: 20px; margin-left: 7px; padding: 0 2px; border: 1px solid #ccd3dc; border-top-color: #abadb3; background: #fff; }
.spin { width: 14px; height: 18px; margin: 0 6px 0 1px; display: grid; gap: 1px; }
.spin button { border: 1px solid #a9a9a9; background: linear-gradient(#47a, #47a) center / 3px 2px no-repeat, #f1f1f1; }
.height .unit { padding-top: 2px; }
.ok { margin-left: auto; display: flex; gap: 7px; }
.opts .btn.blue { width: 73px; border-color: #3c7fb1; background: linear-gradient(#e6f5fd 50%, #bfe5f9 50%, #a5d8f3); }
.opts .btn.focus { box-shadow: inset 0 0 0 2px #2ccaf5; }

.split { flex: none; height: 246px; display: flex; padding-left: 1px; border-right: 3px solid #a0a0a0; border-bottom: 3px solid #a0a0a0; }
.pane { background: #fff; border: 1px solid #a9a9ae; overflow: hidden; }
.fees { flex: 600 1 0; padding: 0 0 0 1px; }
.fees .grid { width: 433px; }
.fees .grid thead th { height: 21px; }
.fees .grid td, .fees .grid th { height: 17px; line-height: 15px; }
.fees .grid .root td, .fees .grid .root th { height: 19px; }
.grid .root td { background: #e0efff; }
.root .node { margin-right: 5px; }
.grid .pick { padding: 0 0 0 27px; border-right-color: #e0e0e0; background: linear-gradient(#bdbdbd, #bdbdbd) 8px 0 / 1px 100% no-repeat, linear-gradient(#bdbdbd, #bdbdbd) 8px 8px / 17px 1px no-repeat, #fff; }
.grid .pick.end { background: linear-gradient(#bdbdbd, #bdbdbd) 8px 0 / 1px 8px no-repeat, linear-gradient(#bdbdbd, #bdbdbd) 8px 8px / 17px 1px no-repeat, #fff; }
.vbar { flex: none; width: 8px; display: flex; align-items: center; justify-content: center; }
.vbar i { width: 6px; height: 100px; border: 1px solid #7a7a7a; background: linear-gradient(#229, #229) 2px 7px / 1px 1px no-repeat, linear-gradient(#229, #229) 2px 91px / 1px 1px no-repeat; }
.rule { flex: 430 1 0; }
.rule p { margin: 0; padding: 3px 2px; white-space: nowrap; }
.rule b { font-size: 13px; }
.hbar { flex: none; height: 8px; display: flex; align-items: center; justify-content: center; }
.hbar i { width: 100px; height: 6px; border: 1px solid #7a7a7a; background: linear-gradient(#229, #229) 6px 2px / 1px 1px no-repeat, linear-gradient(#229, #229) 91px 2px / 1px 1px no-repeat; }
.detail { flex: 1; min-height: 0; display: flex; flex-direction: column; justify-content: space-between; background: #fff; border: 1px solid #a9a9ae; padding: 0 2px 2px 0; }
.rules { width: 100%; }
.grid.rules th { height: 21px; line-height: 13px; }

.hbar { padding-right: 3px; }

.marks { position: absolute; left: 0; top: 0; z-index: 4; pointer-events: none; }
.note { font: 400 16px "Noto Sans CJK SC", sans-serif; }
```
